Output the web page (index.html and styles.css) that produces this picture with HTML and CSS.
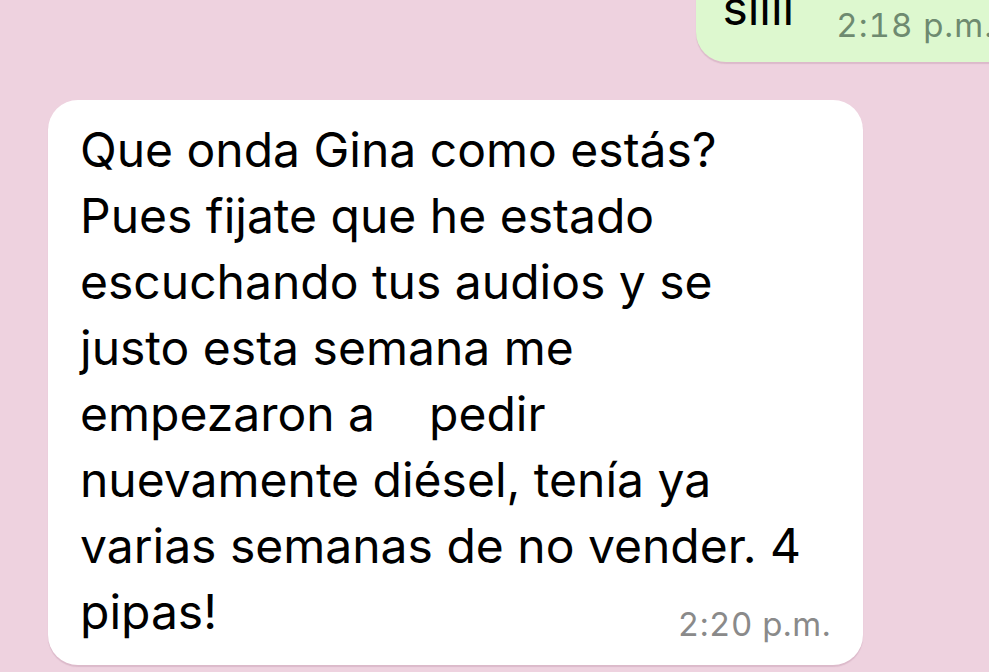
FILE: index.html
```html
<!DOCTYPE html>
<html lang="es">
<head>
    <meta charset="UTF-8">
    <title>Chat</title>
    <link rel="stylesheet" href="styles.css">
</head>
<body>
    <div id="chat">
        <div class="row out">
            <div class="bubble sent">
                <span class="msg-text">siiii</span>
                <span class="msg-time">2:18 p.m.</span>
            </div>
        </div>
        <div class="row in">
            <div class="bubble received">
                <p class="msg-text">Que onda Gina como estás?<br>Pues fijate que he estado<br>escuchando tus audios y se<br>justo esta semana me<br>empezaron a &nbsp;&nbsp; pedir<br>nuevamente diésel, tenía ya<br>varias semanas de no vender. 4<br>pipas!<span class="msg-time">2:20 p.m.</span></p>
            </div>
        </div>
    </div>
</body>
</html>
```

FILE: styles.css
```css
html {
    height: 100%;
}
body {
    height: 100%;
    margin: 0;
    padding: 0;
    background-color: #eed2df;
    overflow: hidden;
    font-family: Inter, "Liberation Sans", sans-serif;
}
#chat {
    display: flex;
    flex-direction: column;
}
.row {
    display: flex;
}
.row.out {
    justify-content: flex-end;
    margin-top: -40px;
    margin-right: -40px;
}
.row.in {
    justify-content: flex-start;
    padding-left: 48px;
    margin-top: 38px;
}
.bubble {
    border-radius: 30px;
    box-shadow: 0 2px 1px rgba(140, 80, 110, 0.18);
}
.sent {
    background-color: #ddf8cf;
    display: flex;
    align-items: baseline;
    box-sizing: border-box;
    padding: 15px 35px 0 26px;
    height: 102px;
}
.msg-text {
    font-size: 48px;
    line-height: 66px;
    color: #000;
}
.msg-time {
    font-size: 33px;
    color: #8a8a8a;
    letter-spacing: 0.5px;
    font-variant-numeric: tabular-nums;
}
.sent .msg-time {
    color: #6e8a70;
    margin-left: 42px;
    letter-spacing: 1px;
    position: relative;
    top: 12px;
}
.received {
    background-color: white;
    width: 815px;
    box-sizing: border-box;
    padding: 17px 32px 16px 32px;
}
.received .msg-text {
    margin: 0;
}
.received .msg-time {
    float: right;
    margin-top: 20px;
    line-height: 50px;
}
```
